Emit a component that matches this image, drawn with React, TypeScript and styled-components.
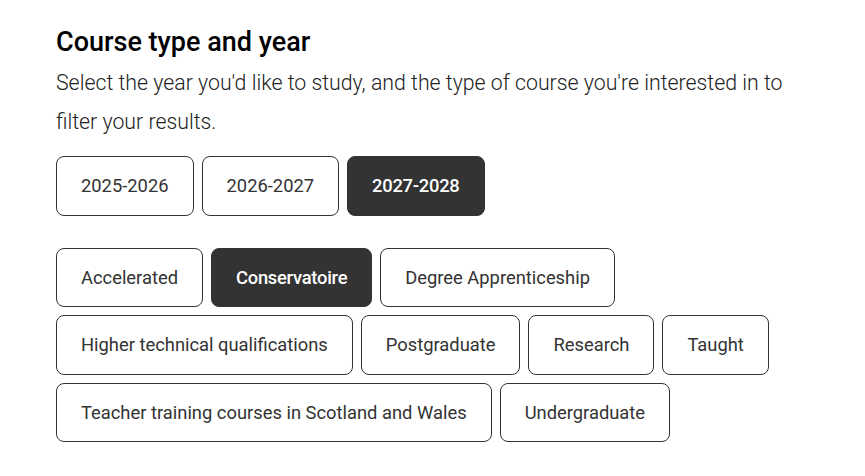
import styled, { createGlobalStyle } from 'styled-components';

const years = ['2025-2026', '2026-2027', '2027-2028'];
const courseTypes = [
    'Accelerated',
    'Conservatoire',
    'Degree Apprenticeship',
    'Higher technical qualifications',
    'Postgraduate',
    'Research',
    'Taught',
    'Teacher training courses in Scotland and Wales',
    'Undergraduate',
];

const GlobalStyle = createGlobalStyle`
    body {
        margin: 0;
        background: #fff;
        font-family: Roboto, "Liberation Sans", sans-serif;
        color: #333;
    }
`;

export default function App() {
    const selectedYear = '2027-2028';
    const selectedType = 'Conservatoire';

    return (
        <>
            <GlobalStyle />
            <Section>
                <Title>Course type and year</Title>
                <Intro>
                    Select the year you'd like to study, and the type of course you're interested in to
                    filter your results.
                </Intro>
                <ChipGroup>
                    {years.map((y) => (
                        <Chip key={y} $active={y === selectedYear}>
                            {y}
                        </Chip>
                    ))}
                </ChipGroup>
                <ChipGroup $spaced>
                    {courseTypes.map((t) => (
                        <Chip key={t} $active={t === selectedType}>
                            {t}
                        </Chip>
                    ))}
                </ChipGroup>
            </Section>
        </>
    );
}

const Section = styled.section`
    width: 750px;
    padding: 23px 0 0 56px;
`;

const Title = styled.h2`
    margin: 0;
    font-size: 27px;
    font-weight: 500;
    line-height: 38px;
    color: #000;
`;

const Intro = styled.p`
    margin: 2px 0 0;
    font-size: 21.3px;
    font-weight: 300;
    line-height: 39px;
    color: #222;
`;

const ChipGroup = styled.div<{ $spaced?: boolean }>`
    display: flex;
    flex-wrap: wrap;
    gap: 8px;
    margin-top: ${(p) => (p.$spaced ? '32px' : '15px')};
`;

const Chip = styled.button<{ $active?: boolean }>`
    font-family: inherit;
    font-size: 18.35px;
    line-height: 21.5px;
    font-weight: ${(p) => (p.$active ? 500 : 400)};
    letter-spacing: ${(p) => (p.$active ? '-0.25px' : '0')};
    padding: 18px 24px;
    border-radius: 8px;
    border: 1px solid #333;
    background: ${(p) => (p.$active ? '#333' : '#fff')};
    color: ${(p) => (p.$active ? '#fff' : '#333')};
    cursor: pointer;
`;
